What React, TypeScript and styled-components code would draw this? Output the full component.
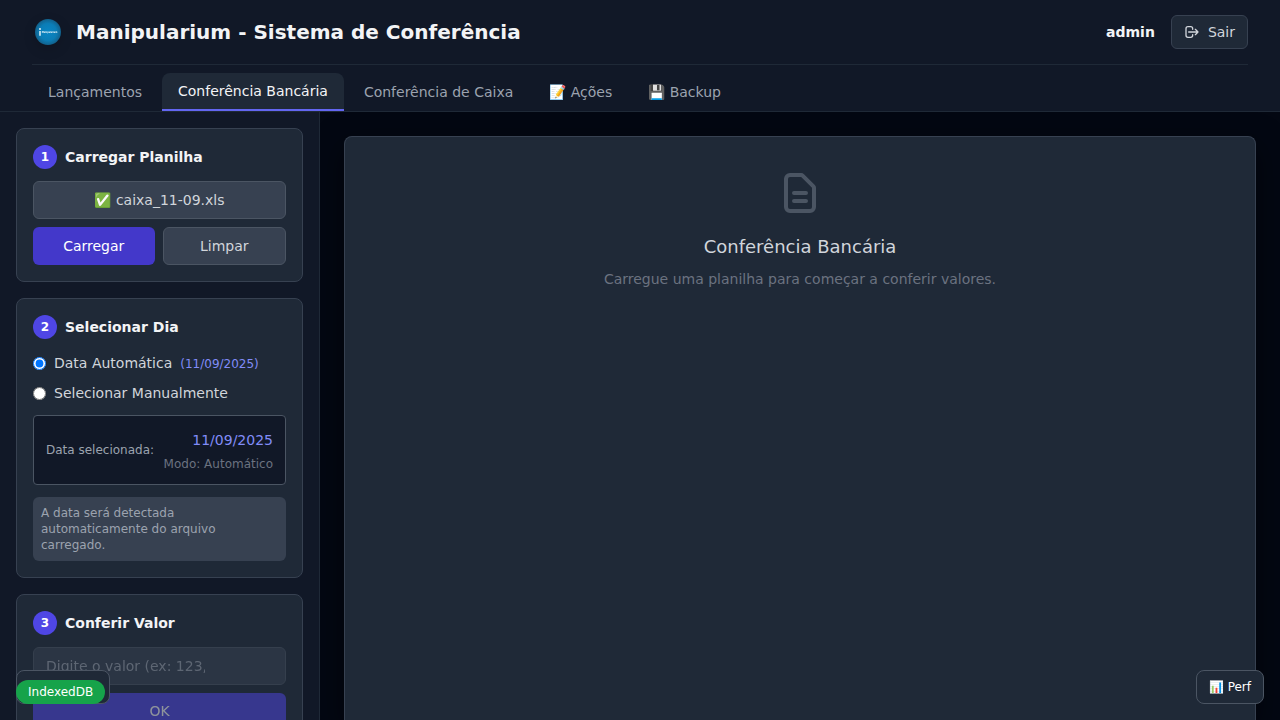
import React from "react";
import styled, { createGlobalStyle } from "styled-components";

const GlobalStyle = createGlobalStyle`
  *, *::before, *::after { box-sizing: border-box; }
  body {
    margin: 0;
    background: #030712;
    color: #f3f4f6;
    font-family: "DejaVu Sans", sans-serif;
    font-size: 14px;
    line-height: 20px;
  }
  button, input { font: inherit; }
  h1, h2, h3, p { margin: 0; }
`;

const Page = styled.div`
  height: 100vh;
  display: flex;
  flex-direction: column;
  overflow: hidden;
`;

const Header = styled.header`
  flex: none;
  padding: 0 32px;
  background: #111827;
  border-bottom: 1px solid #1f2937;
`;

const TopBar = styled.div`
  height: 65px;
  display: flex;
  align-items: center;
  justify-content: space-between;
  border-bottom: 1px solid #1f2937;
`;

const Brand = styled.div`
  display: flex;
  align-items: center;
  gap: 12px;
`;

const Logo = styled.svg`
  width: 32px;
  height: 32px;
  overflow: visible;
  filter: drop-shadow(0 4px 6px rgba(0, 0, 0, 0.15));
`;

const Title = styled.h1`
  font-size: 20px;
  line-height: 28px;
  font-weight: 700;
`;

const Account = styled.div`
  display: flex;
  align-items: center;
  gap: 16px;
`;

const UserName = styled.span`
  font-weight: 700;
`;

const LogoutButton = styled.button`
  height: 34px;
  display: flex;
  align-items: center;
  gap: 8px;
  padding: 0 12px;
  background: #1f2937;
  border: 1px solid #374151;
  border-radius: 6px;
  color: #d1d5db;

  svg { width: 16px; height: 16px; }
`;

const Tabs = styled.nav`
  display: flex;
  gap: 4px;
  padding-top: 8px;
`;

const Tab = styled.button<{ $active?: boolean }>`
  height: 38px;
  padding: 0 16px;
  border: 0;
  border-bottom: ${(p) => (p.$active ? "2px solid #6366f1" : "0")};
  border-radius: 8px 8px 0 0;
  background: ${(p) => (p.$active ? "#1f2937" : "transparent")};
  color: ${(p) => (p.$active ? "#f3f4f6" : "#9ca3af")};
`;

const Body = styled.div`
  flex: 1;
  min-height: 0;
  display: flex;
`;

const Sidebar = styled.aside`
  flex: none;
  width: 320px;
  padding: 16px;
  display: flex;
  flex-direction: column;
  gap: 16px;
  overflow: hidden;
  background: #111827;
  border-right: 1px solid #1f2937;
`;

const Card = styled.section`
  flex: none;
  padding: 16px;
  background: #1f2937;
  border: 1px solid #374151;
  border-radius: 8px;
`;

const StepHead = styled.div`
  display: flex;
  align-items: center;
  gap: 8px;
  margin-bottom: 12px;
`;

const StepNumber = styled.span`
  width: 24px;
  height: 24px;
  display: flex;
  align-items: center;
  justify-content: center;
  border-radius: 50%;
  background: #4f46e5;
  color: #fff;
  font-size: 12px;
  line-height: 16px;
  font-weight: 700;
`;

const StepTitle = styled.h2`
  font-size: 14px;
  line-height: 20px;
  font-weight: 700;
`;

const Stack = styled.div`
  display: flex;
  flex-direction: column;
  gap: 8px;
`;

const ButtonRow = styled.div`
  display: flex;
  gap: 8px;
`;

const Button = styled.button<{ $primary?: boolean; $grow?: boolean }>`
  padding: 8px 12px;
  flex: ${(p) => (p.$grow ? "1 1 0" : "none")};
  border: ${(p) => (p.$primary ? "0" : "1px solid #4b5563")};
  border-radius: 6px;
  background: ${(p) => (p.$primary ? "#4338ca" : "#374151")};
  color: ${(p) => (p.$primary ? "#fff" : "#d1d5db")};

  &:disabled {
    background: #4f46e5;
    opacity: 0.5;
  }
`;

const Option = styled.label`
  height: 22px;
  display: flex;
  align-items: center;
  gap: 8px;
  padding-top: 2px;
  color: #d1d5db;

  input { width: 13px; height: 13px; margin: 0; }
`;

const Detected = styled.span`
  padding-top: 2px;
  font-size: 12px;
  color: #818cf8;
`;

const DateBox = styled.div`
  height: 70px;
  margin-top: 12px;
  padding: 0 12px;
  display: flex;
  align-items: center;
  justify-content: space-between;
  background: #111827;
  border: 1px solid #4b5563;
  border-radius: 4px;
  font-size: 12px;
  color: #9ca3af;
`;

const DateInfo = styled.div`
  display: flex;
  flex-direction: column;
  gap: 4px;
  padding-top: 4px;
  text-align: right;
`;

const DateValue = styled.span`
  font-size: 14px;
  color: #818cf8;
`;

const DateMode = styled.span`
  color: #6b7280;
`;

const Note = styled.p`
  margin-top: 12px;
  padding: 8px;
  background: #374151;
  border-radius: 6px;
  font-size: 12px;
  line-height: 16px;
  color: #9ca3af;
`;

const ValueInput = styled.input`
  width: 100%;
  height: 38px;
  padding: 0 80px 0 12px;
  background: #374151;
  border: 1px solid #4b5563;
  border-radius: 6px;
  opacity: 0.5;

  &::placeholder { color: #9ca3af; opacity: 1; }
`;

const Main = styled.main`
  flex: 1;
  min-width: 0;
  padding: 24px 24px 0;
  display: flex;
  overflow: hidden;
`;

const Panel = styled.section`
  flex: 1;
  padding: 32px;
  display: flex;
  flex-direction: column;
  align-items: center;
  background: #1f2937;
  border: 1px solid #374151;
  border-bottom: 0;
  border-radius: 8px 8px 0 0;
  box-shadow: 0 10px 30px rgba(0, 0, 0, 0.5);
`;

const EmptyIcon = styled.svg`
  width: 48px;
  height: 48px;
  margin-bottom: 16px;
  color: #4b5563;
`;

const EmptyTitle = styled.h3`
  margin-bottom: 8px;
  font-size: 18px;
  line-height: 28px;
  font-weight: 400;
  color: #d1d5db;
`;

const EmptyText = styled.p`
  color: #6b7280;
`;

const FloatingButton = styled.button<{ $side: "left" | "right" }>`
  position: fixed;
  ${(p) => p.$side}: 16px;
  bottom: 16px;
  height: 34px;
  min-width: ${(p) => (p.$side === "left" ? "94px" : "0")};
  padding: 0 12px;
  background: #1f2937;
  border: 1px solid #4b5563;
  border-radius: 8px;
  color: #fff;
  font-size: 12px;
`;

const StorageBadge = styled.span`
  position: fixed;
  left: 16px;
  bottom: 16px;
  padding: 4px 12px;
  border-radius: 12px;
  background: #16a34a;
  color: #fff;
  font-size: 12px;
  line-height: 16px;
`;

const Step = ({ number, title, children }: { number: number; title: string; children: React.ReactNode }) => (
  <Card>
    <StepHead>
      <StepNumber>{number}</StepNumber>
      <StepTitle>{title}</StepTitle>
    </StepHead>
    {children}
  </Card>
);

const tabs = ["Lançamentos", "Conferência Bancária", "Conferência de Caixa", "📝 Ações", "💾 Backup"];

export default function App() {
  return (
    <Page>
      <GlobalStyle />
      <Header>
        <TopBar>
          <Brand>
            <Logo viewBox="0 0 32 32">
              <defs>
                <radialGradient id="disc">
                  <stop offset="0" stopColor="#0a86c4" />
                  <stop offset="0.65" stopColor="#0b7db6" />
                  <stop offset="1" stopColor="#12618c" />
                </radialGradient>
              </defs>
              <circle cx="16" cy="16" r="13" fill="url(#disc)" />
              <path d="M8 12v2M8 15v4.8" stroke="#e3f1f8" strokeWidth="1.5" />
              <text x="9.8" y="16.6" textLength="15.4" lengthAdjust="spacingAndGlyphs" fontSize="2.8" fontWeight="700" fill="#f0f8fc">
                Manipularium
              </text>
            </Logo>
            <Title>Manipularium - Sistema de Conferência</Title>
          </Brand>
          <Account>
            <UserName>admin</UserName>
            <LogoutButton>
              <svg viewBox="0 0 24 24" fill="none" stroke="currentColor" strokeWidth="2" strokeLinecap="round" strokeLinejoin="round">
                <path d="M17 16l4-4m0 0l-4-4m4 4H7m6 4v1a3 3 0 01-3 3H6a3 3 0 01-3-3V7a3 3 0 013-3h4a3 3 0 013 3v1" />
              </svg>
              Sair
            </LogoutButton>
          </Account>
        </TopBar>
        <Tabs>
          {tabs.map((label, i) => (
            <Tab key={label} $active={i === 1}>{label}</Tab>
          ))}
        </Tabs>
      </Header>
      <Body>
        <Sidebar>
          <Step number={1} title="Carregar Planilha">
            <Stack>
              <Button>✅ caixa_11-09.xls</Button>
              <ButtonRow>
                <Button $primary $grow>Carregar</Button>
                <Button $grow>Limpar</Button>
              </ButtonRow>
            </Stack>
          </Step>
          <Step number={2} title="Selecionar Dia">
            <Stack>
              <Option>
                <input type="radio" name="mode" defaultChecked />
                Data Automática
                <Detected>(11/09/2025)</Detected>
              </Option>
              <Option>
                <input type="radio" name="mode" />
                Selecionar Manualmente
              </Option>
            </Stack>
            <DateBox>
              <span>Data selecionada:</span>
              <DateInfo>
                <DateValue>11/09/2025</DateValue>
                <DateMode>Modo: Automático</DateMode>
              </DateInfo>
            </DateBox>
            <Note>A data será detectada automaticamente do arquivo carregado.</Note>
          </Step>
          <Step number={3} title="Conferir Valor">
            <Stack>
              <ValueInput disabled placeholder="Digite o valor (ex: 123,45)" />
              <Button $primary disabled>OK</Button>
            </Stack>
          </Step>
        </Sidebar>
        <Main>
          <Panel>
            <EmptyIcon viewBox="0 0 24 24" fill="none" stroke="currentColor" strokeWidth="2" strokeLinecap="round" strokeLinejoin="round">
              <path d="M9 12h6m-6 4h6m2 5H7a2 2 0 01-2-2V5a2 2 0 012-2h5.586a1 1 0 01.707.293l5.414 5.414a1 1 0 01.293.707V19a2 2 0 01-2 2z" />
            </EmptyIcon>
            <EmptyTitle>Conferência Bancária</EmptyTitle>
            <EmptyText>Carregue uma planilha para começar a conferir valores.</EmptyText>
          </Panel>
        </Main>
      </Body>
      <FloatingButton $side="left" aria-label="IndexedDB" />
      <StorageBadge>IndexedDB</StorageBadge>
      <FloatingButton $side="right">📊 Perf</FloatingButton>
    </Page>
  );
}
